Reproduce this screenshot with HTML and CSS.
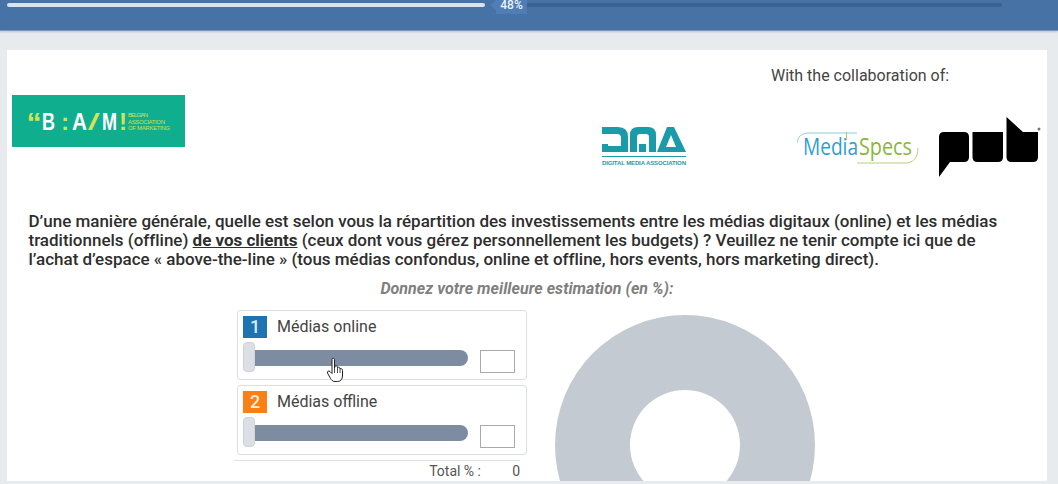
FILE: index.html
```html
<!DOCTYPE html>
<html lang="fr">
<head>
<meta charset="utf-8">
<title>Enquête</title>
<link rel="stylesheet" href="styles.css">
</head>
<body>
<header class="topbar">
  <div class="progress">
    <div class="progress-fill"></div>
    <div class="progress-label">48%</div>
    <div class="progress-rest"></div>
  </div>
</header>
<main class="card">
  <p class="collab">With the collaboration of:</p>
  <div class="logos">
    <svg class="logo-bam" viewBox="0 0 173 52" width="173" height="52">
      <rect width="173" height="52" fill="#0fae8f"/>
      <text x="14.500" y="38" class="bam-q">“</text>
      <text x="30" y="35" class="bam-l" textLength="13" lengthAdjust="spacingAndGlyphs">B</text>
      <text x="49" y="35" class="bam-y">:</text>
      <text x="60" y="35" class="bam-l" textLength="15" lengthAdjust="spacingAndGlyphs">A</text>
      <path d="M76 35 84 18H88L80 35Z" fill="#d4e157"/>
      <text x="90" y="35" class="bam-l" textLength="15" lengthAdjust="spacingAndGlyphs">M</text>
      <text x="107" y="35" class="bam-y">!</text>
      <text x="116" y="22" class="bam-s" textLength="20">BELGIAN</text>
      <text x="116" y="28.500" class="bam-s" textLength="37">ASSOCIATION</text>
      <text x="116" y="35" class="bam-s" textLength="42">OF MARKETING</text>
    </svg>
    <svg class="logo-dma" viewBox="0 0 86 40" width="86" height="40">
      <path d="M1 0H17Q27 0 27 10V25H1V17H7V19H20V11Q20 7 16 7H1Z" fill="#1b9aa9"/>
      <path d="M29 25V8Q29 0 37 0H47Q55 0 55 8V25H48V10Q48 7 45 7H39Q36 7 36 10V25ZM38 17H45V25H38Z" fill="#1b9aa9"/>
      <path fill-rule="evenodd" d="M56 25 66 0H73L85 25ZM65 20H75L70 8Z" fill="#1b9aa9"/>
      <rect x="1" y="29" width="84" height="1" fill="#1b9aa9"/>
      <text x="1" y="37.500" class="dma-s" textLength="84">DIGITAL MEDIA ASSOCIATION</text>
    </svg>
    <svg class="logo-ms" viewBox="0 0 122 36" width="122" height="36">
      <path d="M0 13C1 6 5 3 12 3H60" fill="none" stroke="#8ccbe0" stroke-width="1"/>
      <path d="M121 18C121 28 116 33 108 33H60" fill="none" stroke="#b5d07c" stroke-width="1"/>
      <text x="6" y="25" class="ms-a" textLength="55" lengthAdjust="spacingAndGlyphs">Media</text>
      <text x="62" y="25" class="ms-b" textLength="53" lengthAdjust="spacingAndGlyphs">Specs</text>
      <rect x="49" y="2" width="1" height="8" fill="#a9c96a"/>
    </svg>
    <svg class="logo-pub" viewBox="0 0 102 60" width="102" height="60">
      <path d="M0 20Q0 15 5 15H25Q30 15 30 20V40Q30 45 25 45H11L0 60Z"/>
      <path d="M33.500 15H64V40Q64 45 59 45H38.500Q33.500 45 33.500 40Z"/>
      <path d="M67.500 0 84 15H99V40Q99 45 94 45H72.500Q67.500 45 67.500 40Z"/>
      <circle cx="100" cy="12" r="1.500" fill="#777"/>
    </svg>
  </div>
  <p class="question">D’une manière générale, quelle est selon vous la répartition des investissements entre les médias digitaux (online) et les médias traditionnels (offline) <u class="strong">de vos clients</u> (ceux dont vous gérez personnellement les budgets) ? Veuillez ne tenir compte ici que de l’achat d’espace « above-the-line » (tous médias confondus, online et offline, hors events, hors marketing direct).</p>
  <p class="hint">Donnez votre meilleure estimation (en %):</p>
  <div class="answer">
    <div class="sliders">
      <section class="item">
        <div class="item-head"><span class="badge badge-blue">1</span><span class="item-label">Médias online</span></div>
        <div class="item-ctrl">
          <div class="slider"><span class="thumb"></span><span class="track"></span></div>
          <span class="box"></span>
        </div>
      </section>
      <section class="item">
        <div class="item-head"><span class="badge badge-orange">2</span><span class="item-label">Médias offline</span></div>
        <div class="item-ctrl">
          <div class="slider"><span class="thumb"></span><span class="track"></span></div>
          <span class="box"></span>
        </div>
      </section>
      <div class="total"><span>Total % :</span><span class="total-val">0</span></div>
      <svg class="cursor" viewBox="0 0 18 26" width="18" height="26">
        <path d="M6 2.500C6 .8 8.500 .8 8.500 2.500V11L9 9C10.500 8.300 11.500 9 11.500 10.500 12.800 9.700 14 10.500 14 11.800 15.300 11.200 16.500 12 16.500 13.500V19C16.500 22 14.500 24.500 11.500 24.500H9C6.500 24.500 5.500 23 4.500 21.500L1.500 16C.8 14.500 2.500 13.300 4 14.500L6 16.500Z" fill="#fff" stroke="#222" stroke-width="1"/>
        <path d="M8.500 11V16M11.500 10.500V16M14 11.800V16" fill="none" stroke="#222" stroke-width=".8"/>
      </svg>
    </div>
    <svg class="donut" viewBox="0 0 260 260" width="260" height="260">
      <path fill-rule="evenodd" fill="#c3cad2" d="M130 0A130 130 0 1 1 130 260A130 130 0 1 1 130 0ZM130 75A55 55 0 1 0 130 185A55 55 0 1 0 130 75Z"/>
    </svg>
  </div>
</main>
</body>
</html>
```
FILE: styles.css
```css
* { box-sizing: border-box; }
html, body { margin: 0; height: 484px; overflow: hidden; }
body {
  background: #e8ebee;
  font-family: Roboto, sans-serif;
  color: #333;
}
.topbar {
  height: 31px;
  background: #4672a6;
  border-bottom: 1px solid #7a96b8;
  box-shadow: 0 1px 2px rgba(60,80,110,.25);
  padding: 0 56px 0 7px;
}
.progress { display: flex; align-items: flex-start; height: 14px; }
.progress-fill {
  width: 478px;
  height: 4px;
  margin-top: 3px;
  background: #d5e3f3;
  border-radius: 2px;
}
.progress-label {
  position: relative;
  width: 31px;
  height: 14px;
  margin-left: 11px;
  background: #4f7db5;
  color: #eef4fb;
  font-size: 12px;
  font-weight: 500;
  line-height: 10px;
  text-align: center;
  flex: none;
}
.progress-label::before {
  content: "";
  position: absolute;
  left: -6px;
  top: 0;
  border-style: solid;
  border-width: 5px 6px 5px 0;
  border-color: transparent #4f7db5 transparent transparent;
}
.progress-rest {
  flex: 1;
  height: 4px;
  margin-top: 3px;
  background: #3c6292;
  border-radius: 0 2px 2px 0;
}
.card {
  margin: 19px 11px 0 7px;
  height: 431px;
  background: #fff;
  overflow: hidden;
  padding-top: 18px;
}
.collab {
  margin: 0 0 0 764px;
  font-size: 16px;
  line-height: 16px;
  color: #444;
}
.logos { display: flex; align-items: flex-start; height: 95px; margin-top: 11px; padding-left: 5px; }
.logo-bam { flex: none; }
.logo-dma { flex: none; margin: 32px 0 0 416px; }
.logo-ms { flex: none; margin: 35px 0 0 110px; }
.logo-pub { flex: none; margin: 22px 0 0 20px; }
.bam-l { font: 700 24px "Liberation Sans", sans-serif; fill: #fff; }
.bam-y { font: 700 24px "Liberation Sans", sans-serif; fill: #d4e157; }
.bam-q { font: 700 30px "Liberation Sans", sans-serif; fill: #d4e157; }
.bam-s { font: 400 6px "Liberation Sans", sans-serif; fill: #cfe04f; }
.dma-s { font: 700 6px "Liberation Sans", sans-serif; fill: #1b9aa9; }
.ms-a { font: 500 24px "Open Sans", sans-serif; fill: #2f9fd0; }
.ms-b { font: 500 24px "Open Sans", sans-serif; fill: #8cb63c; }
.question {
  margin: 22px 40px 0 21.500px;
  font-size: 17px;
  font-weight: 500;
  line-height: 18.750px;
  letter-spacing: -0.012px;
  color: #2e2e2e;
}
.strong { font-weight: 700; }
.hint {
  margin: 10.250px 0 0;
  width: 1040px;
  text-align: center;
  font-size: 16px;
  line-height: 19px;
  font-weight: 700;
  font-style: italic;
  letter-spacing: .05px;
  color: #7f7f7f;
}
.answer { display: flex; margin-top: 9px; padding-left: 227px; align-items: flex-start; }
.sliders { position: relative; width: 286px; flex: none; display: flex; flex-direction: column; gap: 5px; padding-top: 3px; }
.item {
  margin-left: 3px;
  width: 290px;
  height: 70px;
  border: 1px solid #dcdfe3;
  border-radius: 3px;
  padding: 5px;
}
.item-head { display: flex; align-items: center; height: 22px; }
.badge {
  width: 24px;
  height: 22px;
  font-size: 18px;
  font-weight: 500;
  line-height: 22px;
  text-align: center;
  flex: none;
}
.badge-blue { background: #1f73b1; color: #d6ebfa; }
.badge-orange { background: #fb7f12; color: #ffeedc; }
.item-label { margin-left: 10px; font-size: 16px; color: #444; }
.item-ctrl { display: flex; align-items: flex-start; margin-top: 4px; }
.slider { display: flex; align-items: center; width: 225px; height: 30px; }
.thumb {
  width: 12px;
  height: 30px;
  background: #dcdfe3;
  border: 1px solid #cfd2d6;
  border-radius: 4px;
  flex: none;
}
.track {
  flex: 1;
  height: 16px;
  margin-top: 2px;
  background: #7d8ca1;
  border-radius: 0 8px 8px 0;
}
.box {
  width: 35px;
  height: 23px;
  margin: 8px 0 0 12px;
  border: 1px solid #aaa;
  background: #fff;
  flex: none;
}
.total {
  display: flex;
  justify-content: flex-end;
  width: 286px;
  padding-top: 2px;
  border-top: 1px solid #dfe2e5;
  font-size: 14px;
  line-height: 17px;
  color: #555;
}
.total-val { width: 39px; text-align: right; }
.cursor { position: absolute; left: 92px; top: 50px; }
.donut { flex: none; margin: 8px 0 0 35px; }
```
